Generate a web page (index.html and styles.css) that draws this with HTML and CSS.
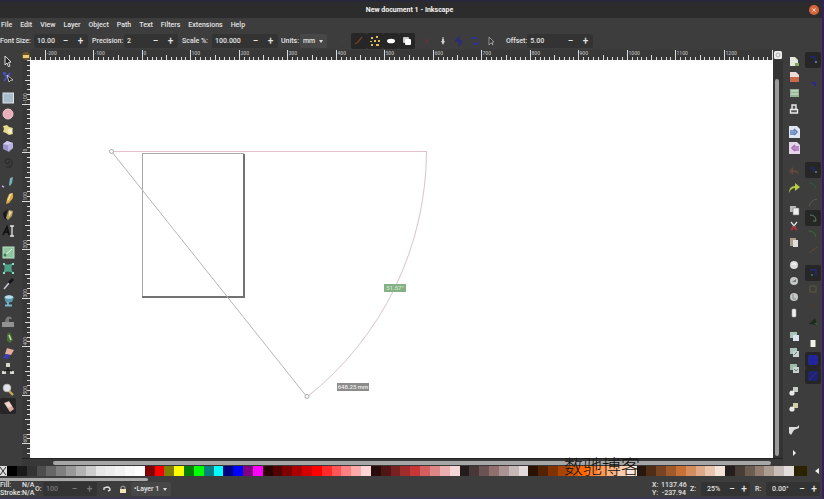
FILE: index.html
```html
<!DOCTYPE html>
<html lang="en">
<head>
<meta charset="utf-8">
<title>New document 1 - Inkscape</title>
<link rel="stylesheet" href="styles.css">
</head>
<body>
<div class="window">
  <header class="titlebar">
    <h1>New document 1 - Inkscape</h1>
    <button class="close" aria-label="Close"><svg viewBox="0 0 10 10"><circle cx="5" cy="5" r="5" fill="#d8643c"/><path d="M3.3 3.3l3.4 3.4M6.7 3.3L3.3 6.7" stroke="#fbd9c8"/></svg></button>
  </header>
  <nav class="menubar">
    <button>File</button><button>Edit</button><button>View</button><button>Layer</button><button>Object</button><button>Path</button><button>Text</button><button>Filters</button><button>Extensions</button><button>Help</button>
  </nav>
  <div class="controls">
    <div class="field field-size"><label for="fs">Font Size:</label><span class="spin"><input id="fs" value="10.00"><button aria-label="Less">−</button><button aria-label="More">+</button></span></div>
    <div class="field field-precision"><label for="pr">Precision:</label><span class="spin"><input id="pr" value="2"><button aria-label="Less">−</button><button aria-label="More">+</button></span></div>
    <div class="field field-scale"><label for="sc">Scale %:</label><span class="spin spin-wide"><input id="sc" value="100.000"><button aria-label="Less">−</button><button aria-label="More">+</button></span></div>
    <div class="field field-units"><label for="un">Units:</label><span class="pick"><select id="un"><option>mm</option></select></span></div>
    <div class="toggles">
      <button aria-label="Ignore first and last"><svg viewBox="0 0 16 16"><path d="M4 11l4-4 4-1" stroke="#37473c" fill="none"/></svg></button>
      <button class="on" aria-label="Between items"><svg viewBox="0 0 16 16"><path d="M4 11l3-2 4-5" stroke="#7a3d20" stroke-width="1.3" fill="none"/></svg></button>
      <button class="on" aria-label="Only selected"><svg viewBox="0 0 16 16" fill="#e0be4c"><path d="M4 4h2v2H4zM9 3h2v2H9zM7 7h2v2H7zM11 7h2v2h-2zM4 11h2v2H4zM9 11h3v2H9zM3 8h2v1H3z"/></svg></button>
      <button class="on" aria-label="Hidden items"><svg viewBox="0 0 16 16"><ellipse cx="8" cy="8" rx="4" ry="2.3" fill="#fff"/></svg></button>
      <button class="on" aria-label="All layers"><svg viewBox="0 0 16 16"><rect x="4" y="4" width="6" height="6" rx="1" fill="#ccc"/><rect x="6" y="6" width="6" height="6" rx="1" fill="#fff"/></svg></button>
    </div>
    <div class="toggles">
      <button aria-label="Reverse"><svg viewBox="0 0 16 16"><path d="M5 5l5 5M10 6l-4 4" stroke="#5f3436"/></svg></button>
      <button aria-label="Phantom measure"><svg viewBox="0 0 16 16"><path d="M7 4h2v4h1l-2 4-2-4h1z" fill="#cfcfcf"/><path d="M7 4h2v2H7z" fill="#888"/></svg></button>
      <button aria-label="To guides"><svg viewBox="0 0 16 16"><path d="M4 8h8M8 3v10M5 5l6 6" stroke="#2b2c78" stroke-width="1.5"/></svg></button>
      <button aria-label="To item"><svg viewBox="0 0 16 16"><path d="M4 6q4-3 6 0M6 10q3 3 6-1" stroke="#30339a" fill="none" stroke-width="1.6"/></svg></button>
      <button aria-label="Mark dimension"><svg viewBox="0 0 16 16"><path d="M6 4l5 5H9l1 3-2-2-2 2z" fill="#333" stroke="#aaa" stroke-width=".8"/></svg></button>
    </div>
    <div class="field field-offset"><label for="of">Offset:</label><span class="spin spin-wide"><input id="of" value="5.00"><button aria-label="Less">−</button><button aria-label="More">+</button></span></div>
  </div>

  <main class="workspace">
    <aside class="bar tools" aria-label="Tools">
      <div class="group">
        <button aria-label="Select"><svg viewBox="0 0 16 16"><path d="M5 3l6 6-2.4.4L10 13l-1.6.6L7 10l-2 2z" fill="#222" stroke="#ddd"/></svg></button>
        <button aria-label="Edit nodes"><svg viewBox="0 0 16 16"><path d="M3 4l4 4M10 4L4 12M3 4h3" stroke="#4a50d2" stroke-width="1.6"/><path d="M7 6l6 5-2.5.3L9 13z" fill="#171717" stroke="#ddd" stroke-width=".8"/></svg></button>
      </div>
      <div class="group">
        <button aria-label="Rectangle"><svg viewBox="0 0 16 16"><rect x="3" y="3" width="10.5" height="10" fill="#a9bccb" stroke="#dbe6ee"/></svg></button>
        <button aria-label="Ellipse"><svg viewBox="0 0 16 16"><circle cx="8" cy="8" r="5" fill="#eaaebb" stroke="#f3cdd5"/></svg></button>
        <button aria-label="Star"><svg viewBox="0 0 16 16"><path d="M3 4l4-1 2 2 4 1-1 3 1 3-4 1-3-2-3-1 1-3z" fill="#e4d98b"/><circle cx="10" cy="9" r="2.5" fill="#f5efbf"/></svg></button>
        <button aria-label="3D box"><svg viewBox="0 0 16 16"><path d="M3 6l4-3 6 2v5l-4 4-6-3z" fill="#9a93ce"/><path d="M3 6l5 1 5-2-6-2z" fill="#cfcbee"/><path d="M8 7v6l5-3V5z" fill="#b9b3e3"/></svg></button>
        <button aria-label="Spiral"><svg viewBox="0 0 16 16"><path d="M8 8q2-1 1 1t-4-1q0-4 4-3t3 5-6 3" fill="none" stroke="#2c2c2c" stroke-width="1.2"/></svg></button>
      </div>
      <div class="group">
        <button aria-label="Pen"><svg viewBox="0 0 16 16"><path d="M10 3l3-1-1 6-2 3-1-1z" fill="#77b3bc"/><path d="M2 11l2 1" stroke="#b9a9ee" stroke-width="1.5"/></svg></button>
        <button aria-label="Pencil"><svg viewBox="0 0 16 16"><path d="M9 3l4-1v5l-4 5-3 1 1-5z" fill="#d9ab42"/><path d="M10 3l2-1-3 7-2 1z" fill="#f5e2a2"/></svg></button>
        <button aria-label="Calligraphy"><svg viewBox="0 0 16 16"><path d="M3 6l5-4-2 5 1 6-3-2z" fill="#171717"/><path d="M9 3l4 1-1 5-4 4-2-2z" fill="#b7a05d"/><path d="M9 4l3 1-3 5z" fill="#e8dbb0"/></svg></button>
        <button aria-label="Text"><svg viewBox="0 0 16 16"><path d="M3 12l4-8 2 8M5 9h4" stroke="#141414" stroke-width="1.8" fill="none"/><path d="M10 3h4M12 3v10M10 13h4" stroke="#e2e2e2" stroke-width="1.3"/></svg></button>
      </div>
      <div class="group">
        <button aria-label="Gradient"><svg viewBox="0 0 16 16"><rect x="3" y="3" width="11" height="11" fill="#8fc59f" stroke="#b8e3c3"/><path d="M4 12l8-7" stroke="#e8f8ec"/><circle cx="5" cy="11" r="1.5" fill="#377b4c"/></svg></button>
        <button aria-label="Mesh"><svg viewBox="0 0 16 16"><path d="M3 3q5 3 10 0-3 5 0 10-5-3-10 0 3-5 0-10z" fill="#4e9f86"/><path d="M3 3h2v2H3zM12 3h2v2h-2zM3 12h2v2H3zM12 12h2v2h-2z" fill="#8ed9c0"/></svg></button>
        <button aria-label="Dropper"><svg viewBox="0 0 16 16"><path d="M9 7L4 13" stroke="#c8c8d2" stroke-width="1.5"/><path d="M9 7l4-4" stroke="#14141d" stroke-width="3"/></svg></button>
        <button aria-label="Paint bucket"><svg viewBox="0 0 16 16"><path d="M4 5l5-2 5 2-2 5-6 1z" fill="#5a98ac"/><ellipse cx="9" cy="5" rx="4" ry="1.8" fill="#b9dce6"/><path d="M8 10v3M5 13.5h7" stroke="#79b8cc" stroke-width="1.8"/></svg></button>
      </div>
      <div class="group">
        <button aria-label="Tweak"><svg viewBox="0 0 16 16"><path d="M2 9h12v5H2z" fill="#929292"/><path d="M5 9q1-7 6-5l1 2H9v3" fill="#777"/></svg></button>
        <button aria-label="Spray"><svg viewBox="0 0 16 16"><path d="M7 5l3-2 3 8-3 3-3-2z" fill="#476f33"/><path d="M9 6l2 5" stroke="#c5ddae" stroke-width="1.5"/></svg></button>
        <button aria-label="Eraser"><svg viewBox="0 0 16 16"><path d="M7 3l7 2-3 5-6-1z" fill="#e3ab9a"/><path d="M5 9l5 1-2 4-5-1z" fill="#3d3abb"/></svg></button>
        <button aria-label="Connector"><svg viewBox="0 0 16 16"><path d="M6 2h4v4H6zM2 10h4v3H2zM10 10h4v3h-4z" fill="#d5d8ca"/><path d="M8 6v3M4 10l4-1 4 1" stroke="#151515" fill="none"/></svg></button>
      </div>
      <div class="group">
        <button aria-label="Zoom"><svg viewBox="0 0 16 16"><path d="M9 9l4 4" stroke="#c8a858" stroke-width="2.4"/><circle cx="7" cy="6" r="3.8" fill="#e2e6ea" stroke="#bbb"/></svg></button>
        <button class="on" aria-label="Measure"><svg viewBox="0 0 16 16"><path d="M4 5l5-2 5 8-4 3z" fill="#d8a9a0"/><path d="M5 5l4-1 3 4-4 2z" fill="#efd5d0"/></svg></button>
      </div>
    </aside>

    <button class="lock" aria-label="Lock guides"><svg viewBox="0 0 8 10"><circle cx="4" cy="6" r="4" fill="#6d5420"/><path d="M1 5h6v3H1z" fill="#e6cf83"/></svg></button>
    <svg class="ruler ruler-h" id="ruler-h" aria-hidden="true"></svg>
    <svg class="ruler ruler-v" id="ruler-v" aria-hidden="true"></svg>
    <button class="fit" aria-label="Fit page"><svg viewBox="0 0 10 10"><rect x="1" y="1" width="8" height="8" rx="1.5" fill="#eee"/><circle cx="5" cy="5" r="2" fill="none" stroke="#aaa"/></svg></button>

    <section class="canvas" aria-label="Drawing">
      <svg>
        <g transform="translate(-30 -60)">
          <rect x="142.5" y="153.5" width="101" height="143" fill="none" stroke="#a8a8a8"/>
          <path d="M244 154v144M142 297h103" stroke="#727272" stroke-width="2"/>
          <path d="M112 151.500H426.500" stroke="#e6c3ca"/>
          <path d="M426.500 151A314.500 314.500 0 0 1 307 397" fill="none" stroke="#d9c2c8"/>
          <path d="M112 152L307 397" stroke="#b8b4b4"/>
          <circle cx="111.500" cy="151.500" r="2" fill="#fff" stroke="#aaa"/>
          <circle cx="307" cy="396.500" r="2" fill="#fff" stroke="#aaa"/>
          <rect x="384" y="284" width="22" height="8" fill="#86b186"/>
          <text x="395" y="290" class="tip tip-angle">51.57°</text>
          <rect x="337" y="383" width="32" height="8" fill="#8c8c8c"/>
          <text x="353" y="389" class="tip">648.25 mm</text>
        </g>
      </svg>
    </section>
    <div class="vscroll"><span></span></div>
    <div class="hscroll"><span></span></div>

    <aside class="bar commands" aria-label="Commands">
      <div class="group">
        <button aria-label="New"><svg viewBox="0 0 16 16"><path d="M4 4h5l3 3v6H4z" fill="#e4e7dc"/><path d="M9 10h4v3H9z" fill="#83a35a"/></svg></button>
        <button aria-label="Open"><svg viewBox="0 0 16 16"><path d="M4 3h6l3 3v3H4z" fill="#eadbd4"/><path d="M4 8h9v5H4z" fill="#c8694c"/></svg></button>
        <button aria-label="Save"><svg viewBox="0 0 16 16"><rect x="4" y="4" width="9" height="8" fill="#93b394"/><path d="M5 6h7M5 9h7" stroke="#dcebdc"/></svg></button>
        <button aria-label="Print"><svg viewBox="0 0 16 16"><path d="M6 8V4h4v4M4.500 8.500h7v3.500h-7z" fill="#555" stroke="#e8e8e8" stroke-width="1.400"/></svg></button>
      </div>
      <div class="group">
        <button aria-label="Import"><svg viewBox="0 0 16 16"><path d="M3 2h8l3 3v9H3z" fill="#dfe6f1"/><path d="M4 6h5v5H4z" fill="#7d9ac9"/><path d="M8 5l3 3-3 3" stroke="#5679b5" stroke-width="1.500" fill="none"/></svg></button>
        <button aria-label="Export"><svg viewBox="0 0 16 16"><path d="M3 2h8l3 3v9H3z" fill="#e6d5e9"/><path d="M8 6h5v5H8z" fill="#b98ac3"/><path d="M9 5L6 8l3 3" stroke="#a265ae" stroke-width="1.500" fill="none"/></svg></button>
      </div>
      <div class="group">
        <button aria-label="Undo"><svg viewBox="0 0 16 16"><path d="M13 12q0-5-6-5V4L3 8l4 4V9q4 0 6 3z" fill="#654a3b"/></svg></button>
        <button aria-label="Redo"><svg viewBox="0 0 16 16"><path d="M3 14q0-7 6-7V4l5 4-5 4V9q-4 0-6 5z" fill="#b8cc42"/></svg></button>
      </div>
      <div class="group">
        <button aria-label="Copy"><svg viewBox="0 0 16 16"><path d="M4 4h6v6H4z" fill="#bbb"/><path d="M7 6h6v7H7z" fill="#eee" stroke="#777" stroke-width=".6"/></svg></button>
        <button aria-label="Cut"><svg viewBox="0 0 16 16"><path d="M5 4l4 5M11 4L7 9" stroke="#ddd" stroke-width="1.300"/><path d="M5 12l3-3 3 3" stroke="#a6323b" stroke-width="2" fill="none"/></svg></button>
        <button aria-label="Paste"><svg viewBox="0 0 16 16"><path d="M4 4h6v8H4z" fill="#a99d8a"/><path d="M7 6h5v7H7z" fill="#ddd"/></svg></button>
      </div>
      <div class="group">
        <button aria-label="Zoom selection"><svg viewBox="0 0 16 16"><circle cx="8" cy="8" r="4" fill="#d8dbd8"/><path d="M6 7h4" stroke="#fff"/></svg></button>
        <button aria-label="Zoom drawing"><svg viewBox="0 0 16 16"><circle cx="8" cy="8" r="4" fill="#c5c9c5"/><path d="M6 9l4-3v3z" fill="#777"/></svg></button>
        <button aria-label="Zoom page"><svg viewBox="0 0 16 16"><circle cx="8" cy="8" r="4" fill="#c5c9c5"/><path d="M7 5v5h3" stroke="#888" fill="none"/></svg></button>
        <button aria-label="Zoom center page"><svg viewBox="0 0 16 16"><rect x="6" y="4" width="4" height="8" rx="1" fill="#eee" stroke="#aaa" stroke-width=".6"/></svg></button>
      </div>
      <div class="group">
        <button aria-label="Duplicate"><svg viewBox="0 0 16 16"><path d="M4 4h7v6H4z" fill="#a9c4b8"/><path d="M7 7h6v6H7z" fill="#dce3ef"/></svg></button>
        <button aria-label="Clone"><svg viewBox="0 0 16 16"><path d="M4 4h7v6H4z" fill="#a9c4b8"/><path d="M7 7h6v6H7z" fill="#c9d3d0"/><path d="M8 11l3-3" stroke="#69776e"/></svg></button>
        <button aria-label="Unlink clone"><svg viewBox="0 0 16 16"><path d="M4 4h7v6H4z" fill="#9bbba8"/><path d="M7 7h6v6H7z" fill="#c9d3d0"/><path d="M8 9l2 2 2-2" stroke="#69776e" fill="none"/></svg></button>
      </div>
      <div class="group">
        <button aria-label="Group"><svg viewBox="0 0 16 16"><path d="M7 4h5v5H7z" fill="#c8cdc8"/><circle cx="6" cy="10" r="2.600" fill="#e8e8e8"/></svg></button>
        <button aria-label="Ungroup"><svg viewBox="0 0 16 16"><path d="M7 4h5v5H7z" fill="#cfcca8"/><circle cx="6" cy="10" r="2.600" fill="#e8e8e8"/></svg></button>
      </div>
      <div class="group">
        <button aria-label="Fill and stroke"><svg viewBox="0 0 16 16"><path d="M3 5h8l2-2v3L8 8l-3 5-2-2z" fill="#dcdcdc"/></svg></button>
      </div>
      <div class="group">
        <button aria-label="More commands"><svg viewBox="0 0 16 16"><path d="M7 5l3 3-3 3z" fill="#eee"/></svg></button>
      </div>
    </aside>

    <aside class="bar snap" aria-label="Snapping">
      <div class="group">
        <button class="on" aria-label="Snap"><svg viewBox="0 0 16 16"><path d="M5 5h5v5" stroke="#22265f" stroke-width="2" fill="none"/><circle cx="11" cy="10" r="1" fill="#699"/></svg></button>
      </div>
      <div class="group group-box">
        <button aria-label="Snap bounding box"><svg viewBox="0 0 16 16"><path d="M7 8h3v3" stroke="#282b88" stroke-width="2" fill="none"/></svg></button>
      </div>
      <div class="group">
        <button class="on" aria-label="Snap nodes"><svg viewBox="0 0 16 16"><path d="M5 6h4v4" stroke="#23275f" stroke-width="2" fill="none"/><circle cx="11" cy="10" r="1" fill="#5a8a70"/></svg></button>
        <button aria-label="Snap paths"><svg viewBox="0 0 16 16"><path d="M4 5q6 0 7 6" stroke="#315a38" fill="none"/></svg></button>
        <button aria-label="Snap intersections"><svg viewBox="0 0 16 16"><path d="M4 12q2-6 8-7" stroke="#5b5b4d" fill="none"/></svg></button>
        <button class="on" aria-label="Snap cusps"><svg viewBox="0 0 16 16"><path d="M5 5q6 0 6 6H8" stroke="#5c7c64" fill="none"/></svg></button>
        <button aria-label="Snap smooth"><svg viewBox="0 0 16 16"><path d="M4 5q6 0 7 6" stroke="#3a6b3c" fill="none"/></svg></button>
        <button aria-label="Snap midpoints"><svg viewBox="0 0 16 16"><path d="M4 11l8-6" stroke="#6b4630" fill="none"/></svg></button>
      </div>
      <div class="group">
        <button class="on" aria-label="Snap others"><svg viewBox="0 0 16 16"><path d="M5 5h6v5" stroke="#23276c" stroke-width="2" fill="none"/><circle cx="7" cy="10" r="1" fill="#477"/></svg></button>
        <button aria-label="Snap centers"><svg viewBox="0 0 16 16"><rect x="5" y="5" width="6" height="6" stroke="#5c5a39" fill="none"/></svg></button>
        <button aria-label="Snap rotation"><svg viewBox="0 0 16 16"><path d="M5 8h6M8 5v6" stroke="#4d3b36"/></svg></button>
        <button aria-label="Snap text"><svg viewBox="0 0 16 16"><path d="M4 11l6-6 2 7z" fill="#1d2a1f"/><path d="M9 10h3v2" fill="#2f6b3c"/></svg></button>
      </div>
      <div class="group">
        <button aria-label="Snap page"><svg viewBox="0 0 16 16"><rect x="5.500" y="4" width="5" height="7" fill="#f2f2e4"/></svg></button>
        <button class="on" aria-label="Snap grids"><svg viewBox="0 0 16 16"><rect x="3" y="3" width="10" height="10" rx="2" fill="#2226a0"/><path d="M3 8h10M8 3v10" stroke="#1f2390"/></svg></button>
        <button class="on" aria-label="Snap guides"><svg viewBox="0 0 16 16"><rect x="3" y="3" width="10" height="10" rx="2" fill="#20236f"/><path d="M4 12l8-8" stroke="#2b2f95"/></svg></button>
      </div>
    </aside>
  </main>

  <div class="palette">
    <div class="swatches" id="swatches"></div>
    <button class="palette-menu" aria-label="Palette menu"><svg viewBox="0 0 8 8"><path d="M6 1v6L2 4z" fill="#eee"/></svg></button>
    <div class="watermark" lang="zh">数驰博客</div>
  </div>
  <div class="pscroll"><span></span></div>

  <footer class="status">
    <dl class="style-readout"><dt>Fill:</dt><dd>N/A</dd><dt>Stroke:</dt><dd>N/A</dd></dl>
    <div class="field field-opacity"><label for="op">O:</label><span class="spin dim"><input id="op" value="100"><button aria-label="Less">−</button><button aria-label="More">+</button></span></div>
    <div class="toggles">
      <button aria-label="Layer visibility"><svg viewBox="0 0 16 16"><path d="M5 9V7l3-1q3 0 3 3l-2 1" stroke="#ddd" stroke-width="1.400" fill="none"/></svg></button>
      <button aria-label="Lock layer"><svg viewBox="0 0 16 16"><path d="M6 8V6q2-2 4 0v2" stroke="#aaa" fill="none"/><path d="M5 8h6v4H5z" fill="#eee6b8"/></svg></button>
    </div>
    <span class="pick pick-layer"><select aria-label="Current layer"><option>•Layer 1</option></select></span>
    <dl class="coords"><dt>X:</dt><dd>1137.46</dd><dt>Y:</dt><dd>-237.94</dd></dl>
    <div class="field field-zoom"><label for="zo">Z:</label><span class="spin spin-tight"><input id="zo" value="25%"><button aria-label="Less">−</button><button aria-label="More">+</button></span></div>
    <div class="field field-rotate"><label for="ro">R:</label><span class="spin spin-tight"><input id="ro" value="0.00°"><button aria-label="Less">−</button><button aria-label="More">+</button></span></div>
  </footer>
</div>
<script src="script.js"></script>
</body>
</html>
```
FILE: styles.css
```css
* { box-sizing: border-box; }
html, body { height: 100%; }
body {
  margin: 0;
  background: #3d3d3d;
  color: #e4e4e4;
  font: 500 7px/8px Roboto, "Noto Sans", sans-serif;
}
button, input, select {
  margin: 0;
  padding: 0;
  border: 0;
  background: none;
  color: inherit;
  font: inherit;
}
svg { display: block; }
dl, dd { margin: 0; }

.window {
  display: flex;
  flex-direction: column;
  min-height: 100%;
  border-right: 2px solid #35205c;
  border-bottom: 2px solid #3c3755;
}

.titlebar {
  display: grid;
  grid-template-columns: 1fr auto 1fr;
  align-items: center;
  height: 18px;
  padding: 0 3px 0 0;
  border-top: 2px solid #28283a;
  background: #2c2c2c;
}
.titlebar h1 {
  grid-column: 2;
  margin: 0;
  font-size: 7px;
  font-weight: 700;
  color: #f4f4f4;
}
.close { justify-self: end; width: 10px; height: 10px; }

.menubar {
  display: flex;
  align-items: center;
  gap: 8px;
  height: 13px;
  padding-left: 1px;
}
.controls { display: flex; align-items: center; height: 19px; }
.field { display: flex; align-items: center; justify-content: space-between; flex: none; }
.field-size { width: 88px; margin-right: 4px; }
.field-precision { width: 86px; margin-right: 4px; }
.field-scale { width: 96px; margin-right: 3px; }
.field-units { width: 46px; margin-right: 8px; }
.field-offset { width: 87px; margin-left: 3px; }
.spin {
  display: flex;
  align-items: center;
  width: 54px;
  height: 14px;
  padding-left: 3px;
  border-radius: 2px;
  background: #333;
}
.spin-wide { width: 66px; }
.spin input { flex: 1; min-width: 0; width: 0; }
.spin button { width: 15px; height: 14px; font-size: 10px; line-height: 12px; }
.spin-tight button { width: 12px; }
.dim { color: #777; }
.pick { position: relative; }
.pick::after {
  content: "";
  position: absolute;
  right: 4px;
  top: 6px;
  border: 2px solid transparent;
  border-top: 3px solid #ddd;
  pointer-events: none;
}
.pick select {
  display: block;
  height: 14px;
  padding: 0 11px 0 3px;
  border-radius: 2px;
  background: #474747;
  appearance: none;
}
.toggles { display: flex; margin-right: 4px; }
.toggles button { width: 16px; height: 16px; }
.on { background: #262626; border-radius: 2px; }

.workspace {
  flex: 1;
  display: grid;
  grid-template-columns: 22px 8px 1fr 10px 21px 18px;
  grid-template-rows: 10px 1fr 8px;
}
.bar { grid-row: 1 / 4; display: flex; flex-direction: column; gap: 7px; }
.bar .group { display: flex; flex-direction: column; align-items: center; }
.bar button { width: 16px; height: 16px; }
.tools { grid-column: 1; gap: 5px; padding-top: 3px; }
.tools .group { align-items: flex-start; }
.commands { grid-column: 5; padding-top: 3px; }
.snap { grid-column: 6; padding-top: 2px; }
.snap .group-box { padding-bottom: 64px; }
.lock { grid-column: 2; grid-row: 1; }
.ruler { width: 100%; height: 100%; overflow: hidden; background: #383838; }
.ruler-h { grid-column: 3; grid-row: 1; }
.ruler-v { grid-column: 2; grid-row: 2; }
.ruler path { stroke: #dcdcdc; }
.ruler text { fill: #b4b4b4; font-size: 5px; }
.fit { grid-column: 4; grid-row: 1; }
.canvas { grid-column: 3; grid-row: 2; background: #fff; min-width: 0; }
.canvas > svg { width: 100%; height: 100%; overflow: hidden; }
.tip { fill: #eee; font-size: 6px; text-anchor: middle; }
.tip-angle { fill: #cfe6cf; }
.vscroll { grid-column: 4; grid-row: 2; padding: 19px 4px 2px 2px; background: #333; }
.vscroll span { display: block; height: 100%; border-radius: 2px; background: #9a9a9a; }
.hscroll { grid-column: 2 / 5; grid-row: 3; padding: 2px 12px 3px 31px; border-top: 1px solid #222; background: #383838; }
.hscroll span { display: block; height: 4px; border-radius: 2px; background: #a6a6a6; }

.palette {
  position: relative;
  display: flex;
  align-items: center;
  justify-content: space-between;
  height: 10px;
}
.swatches {
  flex: 1;
  display: grid;
  grid-template-columns: 7px repeat(80, 1fr) 13px;
  height: 10px;
  margin-right: 6px;
}
.swatches button { min-width: 0; height: 10px; }
.swatches .none { background: #ddd; }
.palette-menu { width: 8px; height: 8px; margin-right: 1px; }
.watermark {
  position: absolute;
  right: 182px;
  bottom: 0;
  color: #111;
  font: 300 19px/20px "Noto Sans CJK SC", sans-serif;
}
.pscroll { height: 5px; padding-top: 2px; }
.pscroll span { display: block; width: 18%; height: 3px; border-radius: 0 2px 2px 0; background: #aaa; }

.status { display: flex; align-items: center; height: 16px; }
.status dl { display: grid; flex: none; }
.style-readout { grid-template-columns: 22px 13px; width: 35px; }
.field-opacity { width: 62px; margin-right: 2px; }
.status .toggles { margin-right: 0; }
.coords { grid-template-columns: 9px 25px; margin-left: auto; margin-right: 4px; }
.coords dd { text-align: right; }
.field-zoom { width: 60px; margin-right: 5px; }
.field-rotate { width: 65px; margin-right: 2px; }
.spin-tight { width: 49px; padding-left: 6px; }
.field-rotate .spin { width: 54px; }
```
FILE: script.js
```js
const NS = "http://www.w3.org/2000/svg";
const STEP = 4.85;

function drawRuler(id, origin, vertical) {
  const svg = document.getElementById(id);
  const box = svg.getBoundingClientRect();
  const length = vertical ? box.height : box.width;
  const size = vertical ? 8 : 10;
  const labelRoom = 14;
  let d = "";
  for (let i = Math.ceil(-origin / STEP); origin + i * STEP < length; i++) {
    const p = Math.floor(origin + i * STEP) + 0.5;
    const len = i % 10 === 0 ? size : i % 5 === 0 ? 5 : 3;
    d += vertical ? `M${size - len} ${p}H${size}` : `M${p} ${size - len}V${size}`;
    const fits = vertical ? p > labelRoom : p < length - labelRoom;
    if (i % 10 === 0 && fits) {
      const text = document.createElementNS(NS, "text");
      text.textContent = String(i * 10);
      text.setAttribute("transform", vertical ? `translate(5 ${p - 1}) rotate(-90)` : `translate(${p + 1} 5)`);
      svg.append(text);
    }
  }
  const path = document.createElementNS(NS, "path");
  path.setAttribute("d", d);
  svg.append(path);
}
drawRuler("ruler-h", 112.3, false);
drawRuler("ruler-v", 92.8, true);

const colors = (
  "000000 1a1a1a 333333 4d4d4d 666666 808080 999999 b3b3b3 cccccc e6e6e6 ececec f2f2f2 f9f9f9 ffffff " +
  "800000 ff0000 808000 ffff00 008000 00ff00 008080 00ffff 000080 0000ff 800080 ff00ff " +
  "2b0000 550000 800000 aa0000 d40000 ff0000 ff2a2a ff5555 ff8080 ffaaaa ffd5d5 " +
  "280b0b 501616 782121 a02c2c c83737 d35f5f de8787 e9afaf f4d7d7 " +
  "241c1c 483737 6c5353 916f6f ac9393 c8b7b7 e3dbdb " +
  "2b1100 552200 803300 aa4400 d45500 ff6600 ff7f2a ff9955 ffb380 ffccaa ffe6d5 " +
  "28170b 502d16 784421 a05a2c c87137 d38d5f deaa87 e9c6af f4e3d7 " +
  "241f1c 483e37 6c5d53 917c6f ac9d93 c8beb7 e3dedb 2b2200"
).split(" ");

const swatches = document.getElementById("swatches");
const none = document.createElement("button");
none.className = "none";
none.setAttribute("aria-label", "No paint");
none.innerHTML = '<svg viewBox="0 0 7 10"><path d="M0 1l6 8M6 1L0 9" stroke="#333"/></svg>';
swatches.append(none);
for (const c of colors) {
  const b = document.createElement("button");
  b.style.background = "#" + c;
  b.setAttribute("aria-label", "#" + c);
  swatches.append(b);
}
```
